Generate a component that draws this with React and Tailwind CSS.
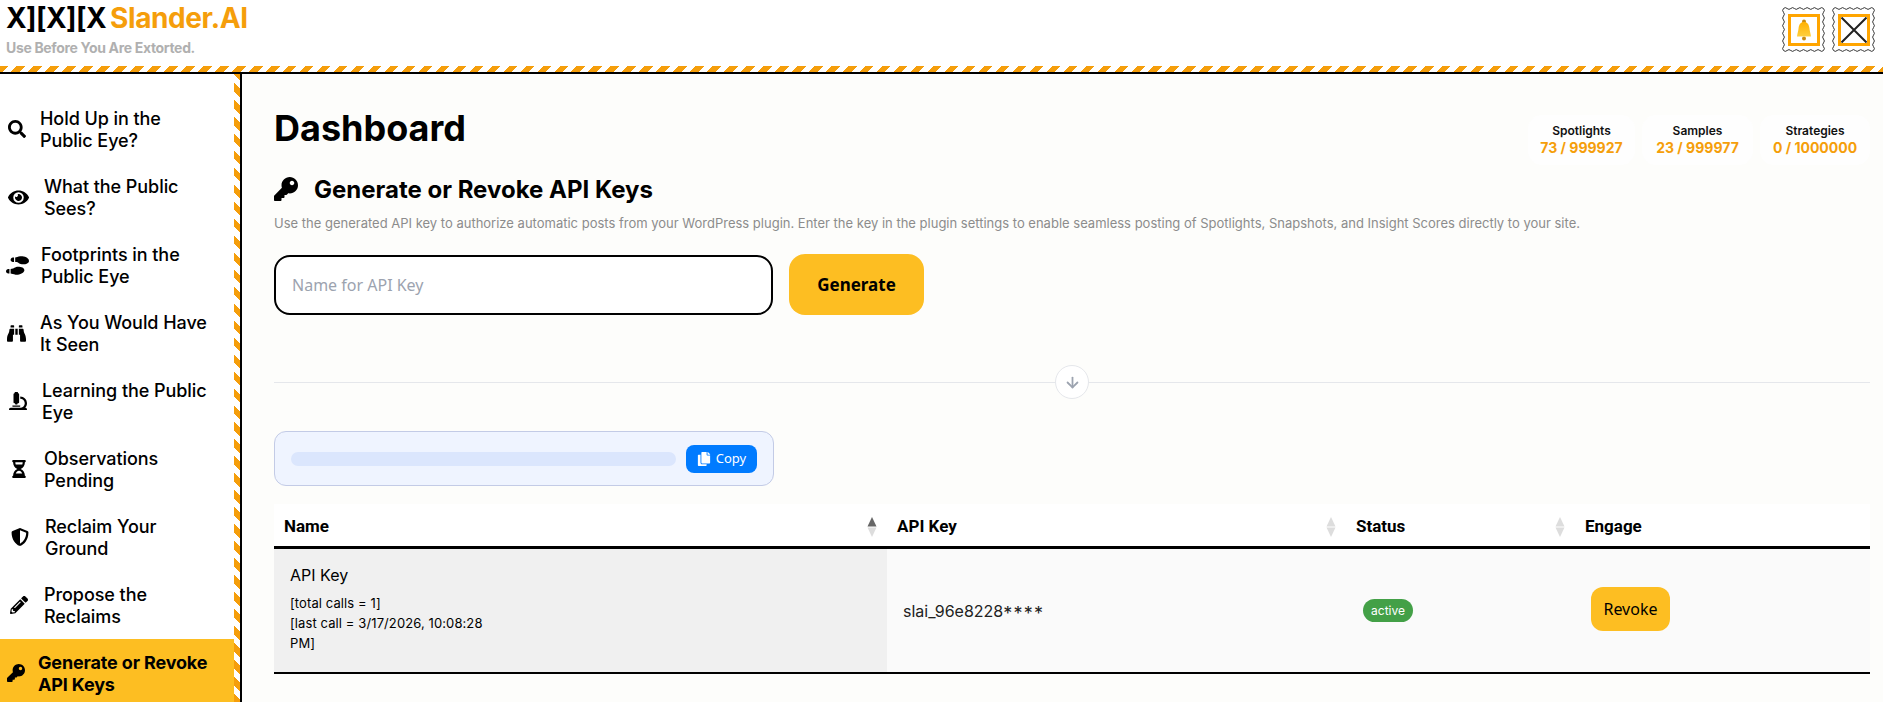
import React from "react";
import { FaSearch, FaEye, FaShoePrints, FaBinoculars, FaMicroscope, FaHourglassHalf, FaShieldAlt, FaPencilAlt, FaKey, FaCopy } from "react-icons/fa";
import { ArrowDown } from "lucide-react";

const nav = [
  { icon: FaSearch, a: ["Hold Up in the", "Public Eye?"], box: "ml-[8px] w-[18px]", gap: "ml-[14px]", size: 18 },
  { icon: FaEye, a: ["What the Public", "Sees?"], box: "ml-[8px] w-[21px]", gap: "ml-[15px]", size: 21 },
  { icon: FaShoePrints, a: ["Footprints in the", "Public Eye"], box: "ml-[6px] w-[23px]", gap: "ml-[12px]", size: 23 },
  { icon: FaBinoculars, a: ["As You Would Have", "It Seen"], box: "ml-[7px] w-[19px]", gap: "ml-[14px]", size: 19 },
  { icon: FaMicroscope, a: ["Learning the Public", "Eye"], box: "ml-[9px] w-[18px]", gap: "ml-[15px]", size: 18 },
  { icon: FaHourglassHalf, a: ["Observations", "Pending"], box: "ml-[12px] w-[14px]", gap: "ml-[18px]", size: 18 },
  { icon: FaShieldAlt, a: ["Reclaim Your", "Ground"], box: "ml-[11px] w-[18px]", gap: "ml-[16px]", size: 18 },
  { icon: FaPencilAlt, a: ["Propose the", "Reclaims"], box: "ml-[10px] w-[18px]", gap: "ml-[16px]", size: 18 },
  { icon: FaKey, a: ["Generate or Revoke", "API Keys"], box: "ml-[7px] w-[18px]", gap: "ml-[13px]", size: 18, active: true },
];

function stampPath() {
  const w = 43, h = 45, r = 1.8;
  const nx = 11, ny = 11;
  const m = 1.5;
  let d = `M${m} ${m}`;
  const sx = (w - 2 * m) / nx, sy = (h - 2 * m) / ny;
  for (let i = 0; i < nx; i++) d += ` q${sx / 2} ${i % 2 ? r : -r} ${sx} 0`;
  for (let i = 0; i < ny; i++) d += ` q${i % 2 ? -r : r} ${sy / 2} 0 ${sy}`;
  for (let i = 0; i < nx; i++) d += ` q${-sx / 2} ${i % 2 ? -r : r} ${-sx} 0`;
  for (let i = 0; i < ny; i++) d += ` q${i % 2 ? r : -r} ${-sy / 2} 0 ${-sy}`;
  return d + "Z";
}

function Stamp({ children }) {
  return (
    <div className="relative w-[43px] h-[45px] flex items-center justify-center">
      <svg className="absolute inset-0" width="43" height="45" viewBox="0 0 43 45" fill="none">
        <path d={stampPath()} stroke="#333" strokeWidth="1" />
      </svg>
      <div className="relative w-[32px] h-[32px] border-[3px] border-[#ffa500] flex items-center justify-center">{children}</div>
    </div>
  );
}

function Sorter({ dark }) {
  return (
    <svg width="10" height="20" viewBox="0 0 10 20" className="shrink-0">
      <path d="M5 0 L9.5 9.6 H0.5Z" fill={dark ? "#666666" : "#dddddd"} />
      <path d="M5 20 L9.5 10.4 H0.5Z" fill="#dddddd" />
    </svg>
  );
}

function Stat({ label, value, w }) {
  return (
    <div className={`${w} h-[50px] rounded-[14px] bg-[#fefefe] flex flex-col items-center justify-center`}>
      <div className="text-[12px] leading-[16px] font-semibold text-[#111]">{label}</div>
      <div className="text-[14px] leading-[18px] font-bold text-[#f59e0b]">{value}</div>
    </div>
  );
}

export default function App() {
  return (
    <div className="h-[702px] w-full overflow-hidden flex flex-col bg-white text-black font-['Inter',sans-serif]">
      <header className="h-[66px] shrink-0 flex justify-between bg-white">
        <div className="pl-[6px]">
          <div className="text-[28px] leading-[36px] font-bold tracking-[-0.6px] whitespace-nowrap">
            X][X][X <span className="-ml-[2px] tracking-[-0.4px] text-[#f59e0b]">Slander.AI</span>
          </div>
          <div className="mt-[4px] text-[14px] leading-[16px] font-bold tracking-[-0.33px] text-[#b0b0b0]">Use Before You Are Extorted.</div>
        </div>
        <div className="flex gap-[7px] pt-[7px] pr-[8px]">
          <Stamp>
            <svg width="16" height="22" viewBox="0 0 16 22">
              <defs>
                <linearGradient id="bell" x1="0" y1="0" x2="0" y2="1">
                  <stop offset="0" stopColor="#ffb000" />
                  <stop offset="1" stopColor="#ffd03d" />
                </linearGradient>
              </defs>
              <circle cx="8" cy="2.4" r="2" fill="#c98a10" />
              <circle cx="8" cy="19.6" r="2" fill="#c98a10" />
              <path d="M8 3C4.6 3 3 5.6 2.6 9 2.3 12 1.4 14.2 1 17.6H15C14.6 14.2 13.7 12 13.4 9 13 5.6 11.4 3 8 3Z" fill="url(#bell)" />
            </svg>
          </Stamp>
          <Stamp>
            <svg width="26" height="26" viewBox="0 0 26 26">
              <path d="M0.5 0.5L25.5 25.5M25.5 0.5L0.5 25.5" stroke="#222" strokeWidth="2" />
            </svg>
          </Stamp>
        </div>
      </header>
      <div className="h-[6px] shrink-0 bg-[repeating-linear-gradient(135deg,#f59e0b_0,#f59e0b_6px,#ffffff_6px,#ffffff_12px)]" />
      <div className="h-[2px] shrink-0 bg-black" />
      <div className="flex-1 flex min-h-0">
        <aside className="w-[234px] shrink-0 bg-white pt-[21px]">
          {nav.map((n) => {
            const Icon = n.icon;
            return (
              <div key={n.a[0]} className={`h-[68px] flex items-center ${n.active ? "bg-[#fdbe22] font-bold" : "font-medium"}`}>
                <span className={`${n.box} shrink-0 flex justify-center`}>
                  <Icon size={n.size} color="#000" />
                </span>
                <span className={`${n.gap} text-[18px] leading-[22px] whitespace-nowrap pt-[1px] ${n.active ? "tracking-[-0.15px]" : "tracking-[-0.06px]"}`}>
                  {n.a[0]}
                  <br />
                  {n.a[1]}
                </span>
              </div>
            );
          })}
        </aside>
        <div className="w-[6px] shrink-0 bg-[repeating-linear-gradient(45deg,#f59e0b_0,#f59e0b_6px,#ffffff_6px,#ffffff_12px)]" />
        <main className="flex-1 min-w-0 border-l-2 border-black bg-[#fdfdfb] pl-[32px] pr-[13px] pt-[32px]">
          <div className="flex justify-between items-start">
            <h1 className="text-[36px] leading-[44px] font-bold">Dashboard</h1>
            <div className="flex gap-[7px] mt-[9px]">
              <Stat label="Spotlights" value="73 / 999927" w="w-[107px]" />
              <Stat label="Samples" value="23 / 999977" w="w-[111px]" />
              <Stat label="Strategies" value="0 / 1000000" w="w-[110px]" />
            </div>
          </div>
          <div className="mt-[10px] h-[30px] flex items-center">
            <FaKey size={24} color="#000" className="-translate-y-[1px]" />
            <h2 className="ml-[16px] text-[24px] leading-[30px] font-bold">Generate or Revoke API Keys</h2>
          </div>
          <p className="mt-[9px] text-[13px] leading-[18px] text-[#8c8c8c] whitespace-nowrap">
            Use the generated API key to authorize automatic posts from your WordPress plugin. Enter the key in the plugin settings to enable seamless posting of Spotlights, Snapshots, and Insight Scores directly to your site.
          </p>
          <div className="mt-[22px] flex items-end gap-[16px]">
            <input
              placeholder="Name for API Key"
              className="w-[499px] h-[60px] rounded-[16px] border-2 border-black bg-white pl-[16px] text-[16px] font-['Noto_Sans',sans-serif] placeholder:text-[#9ca3af] outline-none"
            />
            <button className="w-[135px] h-[61px] rounded-[16px] bg-[#fdbe22] text-[17px] font-bold font-['Noto_Sans',sans-serif]">Generate</button>
          </div>
          <div className="mt-[50px] relative h-[34px] flex items-center justify-center">
            <div className="absolute left-0 right-0 top-1/2 h-px bg-[#e5e7eb]" />
            <div className="relative w-[34px] h-[34px] rounded-full bg-white border border-[#e5e7eb] flex items-center justify-center">
              <ArrowDown size={17} strokeWidth={2.5} color="#9ca3af" />
            </div>
          </div>
          <div className="mt-[32px] w-[500px] h-[55px] rounded-[12px] bg-[#eff4ff] border border-[#c3cbe6] flex items-center pl-[16px] pr-[16px]">
            <div className="w-[385px] h-[14px] rounded-[7px] bg-[#dbe6fd]" />
            <button className="ml-[10px] w-[71px] h-[28px] rounded-[8px] bg-[#007bff] text-white text-[13px] flex items-center justify-center gap-[5px] font-['Noto_Sans',sans-serif]">
              <FaCopy size={14} />
              Copy
            </button>
          </div>
          <div className="mt-[18px]">
            <div className="grid grid-cols-[613px_459px_229px_1fr] h-[42px] bg-white border-b-[3px] border-black box-content font-['Roboto',sans-serif] font-bold text-[17px]">
              <div className="flex items-center justify-between pl-[10px] pr-[10px] pt-[3px]">Name<Sorter dark /></div>
              <div className="flex items-center justify-between pl-[10px] pr-[10px] pt-[3px]">API Key<Sorter /></div>
              <div className="flex items-center justify-between pl-[10px] pr-[10px] pt-[3px]">Status<Sorter /></div>
              <div className="flex items-center pl-[10px] pt-[3px]">Engage</div>
            </div>
            <div className="grid grid-cols-[613px_459px_229px_1fr] h-[123px] border-b-[2px] border-black box-content bg-[#fafafa]">
              <div className="bg-[#f0f0f0] pl-[16px] pt-[14px]">
                <div className="text-[16px] leading-[24px]">API Key</div>
                <div className="mt-[6px] w-[200px] text-[13px] tracking-[0.1px] leading-[20px]">
                  [total calls = 1]
                  <br />
                  [last call = 3/17/2026, 10:08:28 PM]
                </div>
              </div>
              <div className="flex items-center pl-[16px] text-[16px] text-[#222]">
                slai_96e8228
                <span className="inline-block translate-y-[3px] text-[18px] tracking-[1.2px]">****</span>
              </div>
              <div className="flex items-center pl-[17px]">
                <span className="w-[50px] h-[23px] rounded-full bg-[#43a047] text-white text-[12px] flex items-center justify-center">active</span>
              </div>
              <div className="flex items-center pl-[16px] pb-[3px]">
                <button className="w-[79px] h-[44px] rounded-[12px] bg-[#fdbe22] text-[16px] font-['Noto_Sans',sans-serif]">Revoke</button>
              </div>
            </div>
          </div>
        </main>
      </div>
    </div>
  );
}
